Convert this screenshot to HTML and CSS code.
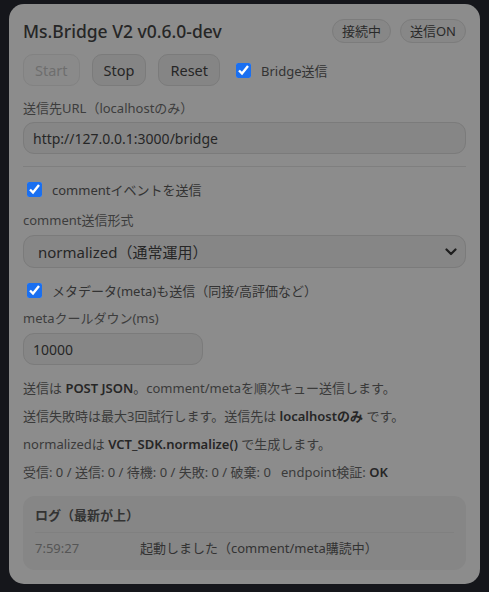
FILE: index.html
```html
<!DOCTYPE html>
<html lang="ja">
<head>
    <meta charset="UTF-8">
    <meta name="viewport" content="width=device-width, initial-scale=1.0">
    <title>Ms.Bridge V2</title>
    <link rel="stylesheet" href="styles.css">
</head>
<body>
    <div class="panel">
        <div class="header">
            <h1 class="title">Ms.Bridge V2 v0.6.0-dev</h1>
            <div class="pills">
                <span class="pill">接続中</span>
                <span class="pill">送信ON</span>
            </div>
        </div>

        <div class="controls">
            <button class="btn" disabled>Start</button>
            <button class="btn">Stop</button>
            <button class="btn">Reset</button>
            <label class="check">
                <input type="checkbox" checked>
                <span>Bridge送信</span>
            </label>
        </div>

        <div class="field">
            <label class="label">送信先URL（localhostのみ）</label>
            <input class="text-input" type="text" value="http://127.0.0.1:3000/bridge">
        </div>

        <hr class="divider">

        <label class="check check-row">
            <input type="checkbox" checked>
            <span>commentイベントを送信</span>
        </label>

        <div class="field field-select">
            <label class="label">comment送信形式</label>
            <div class="select">
                <span>normalized（通常運用）</span>
                <svg class="chevron" width="12" height="8" viewBox="0 0 12 8">
                    <path d="M1.5 1.5 L6 6 L10.5 1.5" fill="none" stroke="#1e1e1e" stroke-width="2.2" stroke-linecap="round" stroke-linejoin="round"/>
                </svg>
            </div>
        </div>

        <label class="check check-row">
            <input type="checkbox" checked>
            <span>メタデータ(meta)も送信（同接/高評価など）</span>
        </label>

        <div class="field field-meta">
            <label class="label">metaクールダウン(ms)</label>
            <input class="text-input short" type="text" value="10000">
        </div>

        <div class="notes">
            <p>送信は <b>POST JSON</b>。comment/metaを順次キュー送信します。</p>
            <p>送信失敗時は最大3回試行します。送信先は <b>localhostのみ</b> です。</p>
            <p>normalizedは <b>VCT_SDK.normalize()</b> で生成します。</p>
            <p>受信: 0 / 送信: 0 / 待機: 0 / 失敗: 0 / 破棄: 0 &nbsp; endpoint検証: <b>OK</b></p>
        </div>

        <div class="log">
            <div class="log-title">ログ（最新が上）</div>
            <div class="log-row">
                <span class="log-time">7:59:27</span>
                <span class="log-msg">起動しました（comment/meta購読中）</span>
            </div>
        </div>
    </div>
</body>
</html>
```

FILE: styles.css
```css
* {
    box-sizing: border-box;
}

body {
    margin: 0;
    background-color: #15161b;
    font-family: "Noto Sans", "Noto Sans CJK JP", sans-serif;
    color: #2a2a2a;
    padding: 4px 9px 8px 9px;
}

.panel {
    background-color: #8c8c8c;
    border-radius: 15px;
    padding: 12px 14px 13px 14px;
    height: 580px;
}

.header {
    display: flex;
    align-items: center;
    justify-content: space-between;
    height: 30px;
}

.title {
    margin: 0;
    font-size: 17.5px;
    font-weight: 500;
    color: #262626;
}

.pills {
    display: flex;
    gap: 9px;
}

.pill {
    font-size: 13px;
    color: #2a2a2a;
    border: 1px solid #7c7c7c;
    background-color: #878787;
    border-radius: 12px;
    padding: 0 9px;
    height: 24px;
    line-height: 22px;
}

.controls {
    display: flex;
    align-items: center;
    gap: 12px;
    margin-top: 8px;
}

.btn {
    font-family: inherit;
    font-size: 14.5px;
    color: #262626;
    background-color: #858585;
    border: 1px solid #7b7b7b;
    border-radius: 10px;
    height: 32px;
    padding: 0 11px;
}

.btn:disabled {
    color: #6e6e6e;
    background-color: #8a8a8a;
    border-color: #828282;
}

.check {
    display: flex;
    align-items: center;
    gap: 10px;
    font-size: 13px;
    color: #333;
}

.check input {
    margin: 0;
    width: 15px;
    height: 15px;
    accent-color: #1a6ff0;
}

.controls .check {
    margin-left: 4px;
}

.field {
    margin-top: 13px;
}

.label {
    display: block;
    font-size: 13px;
    line-height: 18px;
    color: #3d3d3d;
    margin-bottom: 5px;
}

.text-input {
    display: block;
    width: 100%;
    height: 32px;
    font-family: inherit;
    font-size: 14px;
    color: #262626;
    background-color: #868686;
    border: 1px solid #7b7b7b;
    border-radius: 11px;
    padding: 0 9px;
    outline: none;
}

.text-input.short {
    width: 180px;
}

.divider {
    border: none;
    border-top: 1px solid #7f7f7f;
    margin: 12px 0 13px 0;
}

.check-row {
    margin-left: 4px;
    height: 18px;
}

.field-select {
    margin-top: 13px;
}

.field-select .label {
    margin-bottom: 6px;
}

.field + .check-row {
    margin-top: 13px;
}

.field-meta {
    margin-top: 10px;
}

.field-meta .label {
    margin-bottom: 6px;
}

.select {
    display: flex;
    align-items: center;
    justify-content: space-between;
    height: 33px;
    font-size: 15px;
    color: #262626;
    background-color: #868686;
    border: 1px solid #7b7b7b;
    border-radius: 11px;
    padding: 0 8px 0 14px;
}

.notes {
    margin-top: 9px;
}

.notes p {
    margin: 0;
    font-size: 13px;
    color: #3a3a3a;
    line-height: 28px;
}

.notes b {
    font-weight: 600;
    color: #262626;
}

.log {
    margin-top: 10px;
    background-color: #868686;
    border-radius: 12px;
    padding: 10px 12px 13px 12px;
}

.log-title {
    font-size: 13px;
    line-height: 18px;
    font-weight: 700;
    color: #333;
    padding-bottom: 8px;
    border-bottom: 1px solid #808080;
}

.log-row {
    display: flex;
    font-size: 13px;
    line-height: 18px;
    padding-top: 6px;
}

.log-time {
    width: 105px;
    color: #555;
}

.log-msg {
    color: #333;
}
```
